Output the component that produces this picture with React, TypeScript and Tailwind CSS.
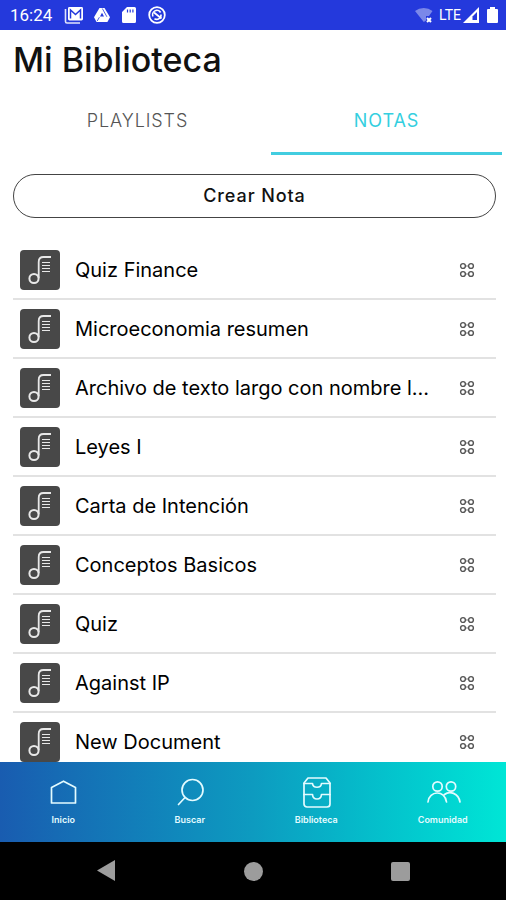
import type { ReactNode } from "react";

const notes = [
  "Quiz Finance",
  "Microeconomia resumen",
  "Archivo de texto largo con nombre l...",
  "Leyes I",
  "Carta de Intención",
  "Conceptos Basicos",
  "Quiz",
  "Against IP",
  "New Document",
];

function StatusBar() {
  return (
    <div className="flex h-[30px] shrink-0 items-center justify-between bg-[#2439dc] pr-2 pl-[10px] font-[Roboto,sans-serif] text-white">
      <div className="flex items-center gap-[10px]">
        <span className="mr-[2px] text-[17px] leading-5">16:24</span>
        <svg width="20" height="18" viewBox="0 0 20 18" fill="none">
          <path d="M1.5 3v12.5a1.5 1.5 0 0 0 1.5 1.5h13" stroke="#dfe3fb" strokeWidth="1.6" />
          <rect x="4" y="1" width="15" height="13.5" rx="1.4" fill="white" />
          <path d="M6.5 12.5V4l5 4.5 5-4.5v8.5" stroke="#2439dc" strokeWidth="1.5" />
        </svg>
        <svg width="16" height="16" viewBox="0 0 16 16">
          <path d="M5.5 1h5L16 10.2 13.4 15H2.6L0 10.2z" fill="white" />
          <path d="M8 5.8 6 9.600h4z" fill="#2439dc" />
          <path d="m8.300 1.500 4.600 8.300M5.400 10.200 3.200 14" stroke="#2439dc" strokeWidth="0.800" />
        </svg>
        <svg width="14" height="16" viewBox="0 0 14 16" className="ml-[2px]">
          <path d="M5 0h7.5A1.5 1.5 0 0 1 14 1.5v13a1.5 1.5 0 0 1-1.5 1.5h-11A1.5 1.5 0 0 1 0 14.5V5z" fill="white" />
          <path d="M5.5 2.5v3M8.2 2.5v3M10.9 2.5v3" stroke="#2439dc" strokeWidth="1.2" />
        </svg>
        <svg width="18" height="18" viewBox="0 0 18 18" fill="none" stroke="white" className="ml-[2px]">
          <circle cx="9" cy="9" r="7.8" strokeWidth="1.8" />
          <path d="M5 10.5a4.3 4.3 0 0 1 7.6-4M13 8.5a4.3 4.3 0 0 1-6.5 4.2" strokeWidth="1.6" />
          <path d="m6 6.5 7.5 6" strokeWidth="1.8" />
        </svg>
      </div>
      <div className="flex items-center">
        <svg width="18" height="16" viewBox="0 0 18 16" className="mr-[6px]">
          <path d="M0 4a14 14 0 0 1 17.5 0L14 9h-3v4.5L8.8 15z" fill="#7b88e9" />
          <path d="m12 11 4 4m0-4-4 4" stroke="white" strokeWidth="2" />
        </svg>
        <span className="text-[14px] leading-5">LTE</span>
        <svg width="16" height="16" viewBox="0 0 16 16" className="mr-2 ml-[2px]">
          <path d="M16 0v16H0z" fill="white" />
          <path d="M14 5v8H9.500V9.500z" fill="#2439dc" />
        </svg>
        <svg width="11" height="16" viewBox="0 0 11 16">
          <path d="M3 0h5v2h2a1 1 0 0 1 1 1v12a1 1 0 0 1-1 1H1a1 1 0 0 1-1-1V3a1 1 0 0 1 1-1h2z" fill="white" />
        </svg>
      </div>
    </div>
  );
}

function NoteIcon() {
  return (
    <svg width="40" height="40" viewBox="0 0 40 40" fill="none" className="shrink-0" aria-hidden="true">
      <rect width="40" height="40" rx="4" fill="#484848" />
      <g stroke="#e8e8e8">
        <circle cx="14" cy="28.5" r="4.6" strokeWidth="2" />
        <path d="M18.700 28V12c0-3.500 2-5 4.800-5H31" strokeWidth="1.800" />
        <path d="M22 12.500h8M22 15.500h8M22 18.500h8M22 21.500h8" strokeWidth="1.200" />
      </g>
    </svg>
  );
}

function DotsIcon() {
  return (
    <svg width="16" height="16" viewBox="0 0 16 16" fill="none" stroke="#555555" strokeWidth="1.4" aria-hidden="true">
      <circle cx="4" cy="4" r="2.4" />
      <circle cx="12" cy="4" r="2.4" />
      <circle cx="4" cy="12" r="2.4" />
      <circle cx="12" cy="12" r="2.4" />
      <path d="M6.400 4h3.200M6.400 12h3.200" strokeWidth="0.8" />
    </svg>
  );
}

function NavItem({ label, children }: { label: string; children: ReactNode }) {
  return (
    <a href="#" className="flex flex-col items-center gap-1 pt-[14px] text-[#e3fbff]">
      <svg width="36" height="34" viewBox="0 0 36 34" fill="none" stroke="currentColor" strokeWidth="1.7" strokeLinejoin="round" strokeLinecap="round" aria-hidden="true">
        {children}
      </svg>
      <span className="text-[9px] leading-3 font-semibold">{label}</span>
    </a>
  );
}

export default function App() {
  return (
    <div className="flex h-screen flex-col bg-white font-[Inter,sans-serif] text-[#111111]">
      <StatusBar />

      <main className="flex min-h-0 flex-1 flex-col">
        <h1 className="px-[13px] pt-[10px] text-[34px] leading-10 font-medium">Mi Biblioteca</h1>

        <div role="tablist" className="mt-2 flex gap-[18px] pr-1 pl-[22px] text-[18px] leading-6 tracking-wider">
          <button role="tab" aria-selected="false" className="h-[67px] flex-1 border-b-[3px] border-transparent pt-[2px] font-light text-[#555555]">
            PLAYLISTS
          </button>
          <button role="tab" aria-selected="true" className="h-[67px] flex-1 border-b-[3px] border-[#42cde0] pt-[2px] text-[#35cfe0]">
            NOTAS
          </button>
        </div>

        <div className="flex min-h-0 flex-1 flex-col pr-[10px] pl-[13px]">
          <button className="mt-[19px] h-11 shrink-0 rounded-full border border-[#444444] text-[18px] leading-6 font-medium tracking-wider">
            Crear Nota
          </button>

          <ul className="mt-[23px] min-h-0 flex-1 overflow-hidden">
            {notes.map((note) => (
              <li key={note} className="flex h-[59px] items-center border-b-2 border-[#e2e2e2] pt-px pr-[21px] pl-[7px]">
                <NoteIcon />
                <span className="mr-3 ml-[15px] flex-1 truncate text-[20px] leading-6 text-black">{note}</span>
                <button aria-label={`Opciones de ${note}`}>
                  <DotsIcon />
                </button>
              </li>
            ))}
          </ul>
        </div>
      </main>

      <nav className="grid h-20 shrink-0 grid-cols-4 bg-linear-to-r from-[#195cb0] via-[#0d9bc0] to-[#00e6d6]">
        <NavItem label="Inicio">
          <path d="M6.500 11.500 18.500 5.200l12 6.300v15.500h-24z" />
        </NavItem>
        <NavItem label="Buscar">
          <circle cx="20.500" cy="14" r="10.500" />
          <path d="m13 21.500-6.500 7" />
        </NavItem>
        <NavItem label="Biblioteca">
          <path d="M10 2h18l4 5v21a3 3 0 0 1-3 3H9a3 3 0 0 1-3-3V7z" />
          <path d="M6 7.500h8.500c.5 5 8.500 5 9 0H32M6 18.500h8.500c.5 6 8.500 6 9 0H32" />
        </NavItem>
        <NavItem label="Comunidad">
          <circle cx="12.500" cy="10.500" r="4.700" />
          <circle cx="26" cy="10.500" r="4.700" />
          <path d="M3 26c1-11.500 17-12.500 18.500 0M19.500 18.500c5-4 14-1.500 15.500 7.500" />
        </NavItem>
      </nav>

      <div className="flex h-[58px] shrink-0 items-center justify-between bg-black px-24">
        <button aria-label="Atrás">
          <svg width="20" height="22" viewBox="0 0 20 22">
            <path d="M19 0v21L1 10.500z" fill="#9c9c9c" />
          </svg>
        </button>
        <button aria-label="Inicio del sistema" className="size-[19px] rounded-full bg-[#9c9c9c]" />
        <button aria-label="Recientes" className="size-[19px] rounded-[2px] bg-[#9c9c9c]" />
      </div>
    </div>
  );
}
